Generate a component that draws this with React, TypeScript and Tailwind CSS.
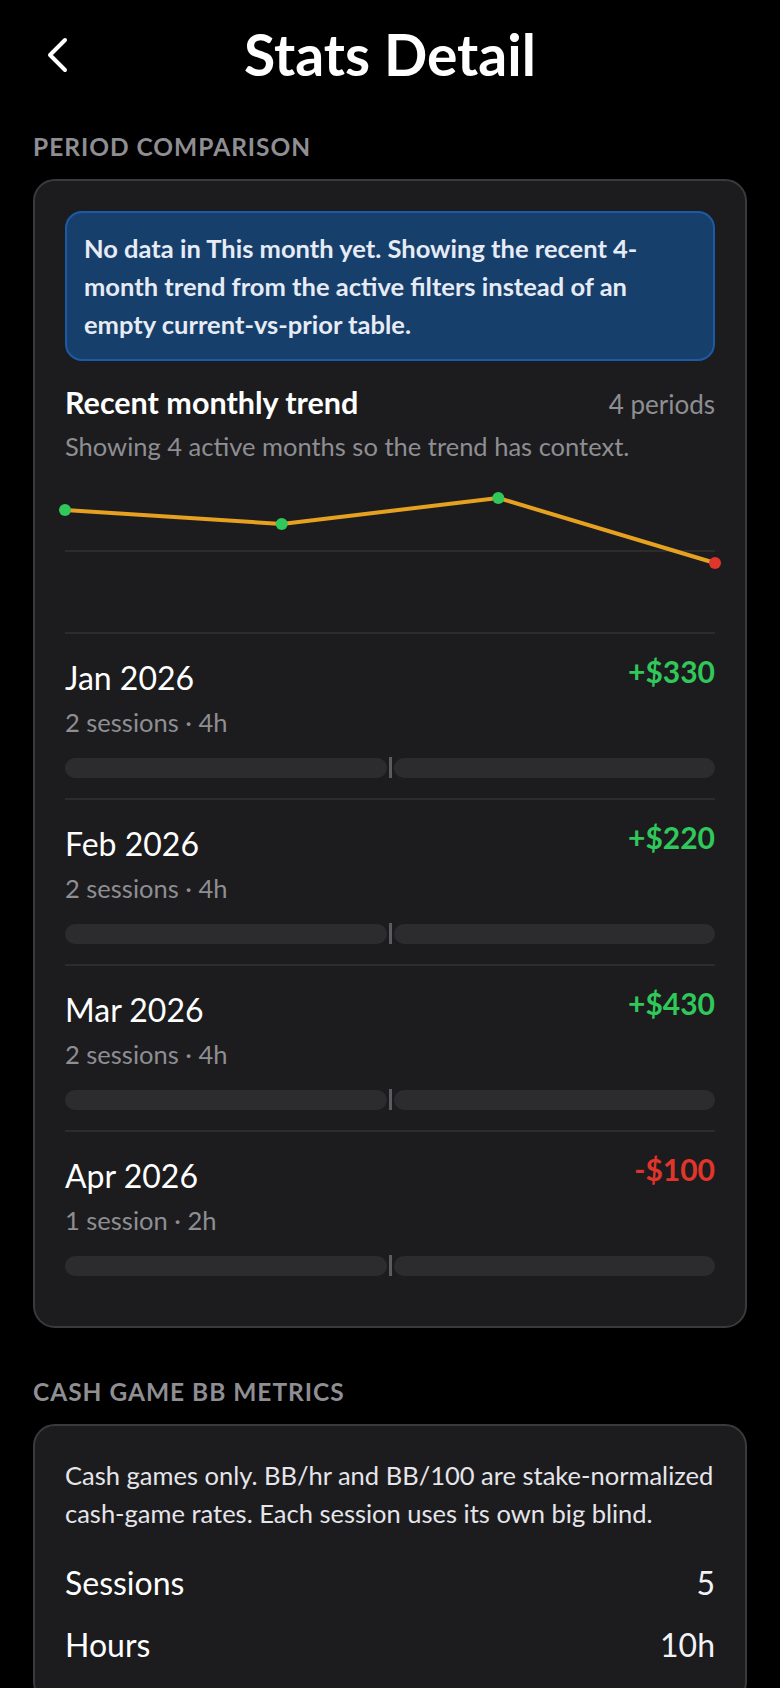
import React from "react";

const months = [
  { label: "Jan 2026", amount: "+$330", sub: "2 sessions · 4h", pos: true },
  { label: "Feb 2026", amount: "+$220", sub: "2 sessions · 4h", pos: true },
  { label: "Mar 2026", amount: "+$430", sub: "2 sessions · 4h", pos: true },
  { label: "Apr 2026", amount: "-$100", sub: "1 session · 2h", pos: false },
];

const pts = [
  { x: 0, y: 49, c: "#30c85a" },
  { x: 216.7, y: 63, c: "#30c85a" },
  { x: 433.3, y: 37, c: "#30c85a" },
  { x: 650, y: 102, c: "#e0352b" },
];

export default function App() {
  return (
    <div
      className="min-h-screen bg-black px-[33px] pb-10"
      style={{ fontFamily: "Lato, 'Noto Sans', sans-serif" }}
    >
      <div className="grid grid-cols-[1fr_auto_1fr] items-center pt-[21px]">
        <div className="pl-[13px]">
          <svg width="22" height="36" viewBox="0 0 22 36" fill="none">
            <path
              d="M19 3 L4 18 L19 33"
              stroke="white"
              strokeWidth="4"
              strokeLinecap="round"
              strokeLinejoin="round"
            />
          </svg>
        </div>
        <h1 className="text-[57px] leading-[67px] font-bold text-white">Stats Detail</h1>
        <div />
      </div>

      <div className="mt-[44px] text-[24.5px] leading-[29px] font-bold tracking-[0.04em] text-[#8e8e93]">
        PERIOD COMPARISON
      </div>

      <div className="mt-[18px] rounded-[22px] border-2 border-[#3a3a3c] bg-[#1c1c1e] p-[30px]">
        <div className="rounded-[17px] border-2 border-[#1d5aa6] bg-[#173f6b] px-[17px] py-[16px] text-[25.5px] leading-[38px] font-bold text-[#e6ebf5]">
          No data in This month yet. Showing the recent 4-month trend from the active filters instead of an empty current-vs-prior table.
        </div>

        <div className="mt-[24px] flex items-baseline justify-between">
          <div className="text-[30.5px] leading-[34px] font-bold text-white">Recent monthly trend</div>
          <div className="text-[26px] leading-[29px] text-[#8e8e93]">4 periods</div>
        </div>
        <div className="mt-[13px] text-[25.5px] leading-[29px] text-[#8e8e93]">
          Showing 4 active months so the trend has context.
        </div>

        <svg width="650" height="171" viewBox="0 0 650 171" className="block overflow-visible">
          <line x1="0" y1="90" x2="650" y2="90" stroke="#2c2c2e" strokeWidth="2" />
          <polyline
            points={pts.map((p) => `${p.x},${p.y}`).join(" ")}
            fill="none"
            stroke="#e5a11f"
            strokeWidth="4"
            strokeLinejoin="round"
          />
          {pts.map((p, i) => (
            <circle key={i} cx={p.x} cy={p.y} r="6" fill={p.c} />
          ))}
        </svg>

        {months.map((m) => (
          <div key={m.label} className="border-t-2 border-[#2c2c2e] pt-[26px] pb-[20px]">
            <div className="flex items-start justify-between">
              <div className="text-[32px] leading-[36px] text-white">{m.label}</div>
              <div
                className={
                  m.pos
                    ? "-mt-[6px] text-[30px] leading-[34px] font-bold text-[#30c85a]"
                    : "-mt-[6px] text-[30px] leading-[34px] font-bold text-[#e0352b]"
                }
              >
                {m.amount}
              </div>
            </div>
            <div className="mt-[12px] text-[25.5px] leading-[29px] text-[#8e8e93]">{m.sub}</div>
            <div className="mt-[20px] flex items-center gap-[2px]">
              <div className="h-[20px] flex-1 rounded-full bg-[#2c2c2e]" />
              <div className="h-[21px] w-[3px] bg-[#5c5c60]" />
              <div className="h-[20px] flex-1 rounded-full bg-[#2c2c2e]" />
            </div>
          </div>
        ))}
      </div>

      <div className="mt-[49px] text-[24.5px] leading-[29px] font-bold tracking-[0.04em] text-[#8e8e93]">
        CASH GAME BB METRICS
      </div>

      <div className="mt-[18px] rounded-[22px] border-2 border-[#3a3a3c] bg-[#1c1c1e] px-[30px] pt-[30px] pb-[40px]">
        <div className="text-[25.5px] leading-[38px] text-[#e5e5ea]">
          Cash games only. BB/hr and BB/100 are stake-normalized cash-game rates. Each session uses its own big blind.
        </div>
        <div className="mt-[33px] flex flex-col gap-[27px]">
          {[
            ["Sessions", "5"],
            ["Hours", "10h"],
          ].map(([k, v]) => (
            <div key={k} className="flex items-center justify-between text-[32px] leading-[35px]">
              <span className="text-white">{k}</span>
              <span className="text-[#f2f2f7]">{v}</span>
            </div>
          ))}
        </div>
      </div>
    </div>
  );
}
